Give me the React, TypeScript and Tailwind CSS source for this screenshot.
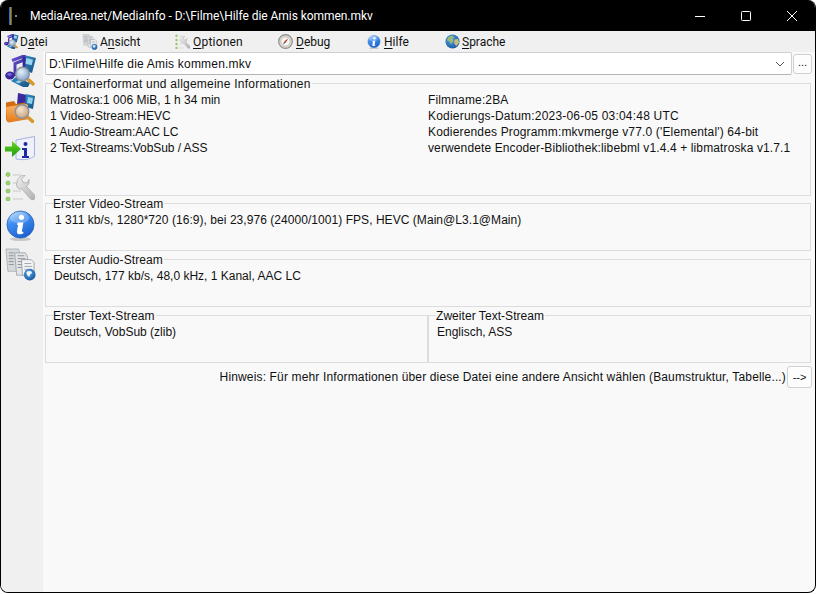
import React from "react";

const Defs = () => (
  <svg width="0" height="0" className="block">
    <defs>
      <linearGradient id="bluei" x1="0.2" y1="0" x2="0.7" y2="1">
        <stop offset="0" stopColor="#a8d0fb" />
        <stop offset="0.35" stopColor="#3f8ff0" />
        <stop offset="1" stopColor="#1a5fd0" />
      </linearGradient>
      <linearGradient id="purple" x1="0" y1="0" x2="1" y2="1">
        <stop offset="0" stopColor="#6a5ad8" />
        <stop offset="1" stopColor="#2a1e80" />
      </linearGradient>
      <linearGradient id="film" x1="0" y1="0" x2="1" y2="1">
        <stop offset="0" stopColor="#2f8fc8" />
        <stop offset="1" stopColor="#1c4f80" />
      </linearGradient>
      <radialGradient id="lens" cx="0.4" cy="0.35" r="0.7">
        <stop offset="0" stopColor="#e6f0fa" />
        <stop offset="1" stopColor="#7d9fc8" />
      </radialGradient>
      <radialGradient id="lens2" cx="0.4" cy="0.35" r="0.7">
        <stop offset="0" stopColor="#f6e4d2" />
        <stop offset="1" stopColor="#c8a078" />
      </radialGradient>
      <linearGradient id="folder" x1="0" y1="0" x2="0" y2="1">
        <stop offset="0" stopColor="#fbb56a" />
        <stop offset="1" stopColor="#e27a18" />
      </linearGradient>
      <linearGradient id="arrow" x1="0" y1="0" x2="0" y2="1">
        <stop offset="0" stopColor="#66d820" />
        <stop offset="1" stopColor="#1d9a10" />
      </linearGradient>
      <linearGradient id="wrench" x1="0" y1="0" x2="1" y2="1">
        <stop offset="0" stopColor="#f0f0f0" />
        <stop offset="1" stopColor="#b0b0b0" />
      </linearGradient>
      <radialGradient id="globe" cx="0.4" cy="0.35" r="0.75">
        <stop offset="0" stopColor="#5aa8e8" />
        <stop offset="1" stopColor="#0f4f98" />
      </radialGradient>
    </defs>
  </svg>
);

const Lens = ({ x, y, r, fill = "url(#lens)" }: { x: number; y: number; r: number; fill?: string }) => (
  <>
    <path d={`M${x + r * 0.7} ${y + r * 0.7}L${x + r * 1.55} ${y + r * 1.45}`} stroke="#d9962e" strokeWidth={r * 0.5} strokeLinecap="round" />
    <circle cx={x} cy={y} r={r} fill={fill} stroke="#8a929c" strokeWidth={r * 0.2} />
  </>
);

const MusicIcon = ({ s }: { s: number }) => (
  <svg width={s} height={s} viewBox="0 0 32 32">
    <path d="M19 0l12 3-4 15-9-3z" fill="url(#film)" />
    <path d="M21.500 3l6.500 1.800-1.400 5.400-6.600-1.800z" fill="#9ad6f2" />
    <path d="M6 26l5-4 14 6-2 4-5 0z" fill="url(#film)" />
    <path d="M10 27l4-2 3 1.500-3 2z" fill="#8fd0f0" />
    <path d="M7 5.500L19 1v4L10 8.500V21" fill="none" stroke="url(#purple)" strokeWidth="3" />
    <path d="M19 2v16" stroke="#38289a" strokeWidth="2.800" />
    <ellipse cx="5" cy="20.500" rx="4.800" ry="4" fill="#3a2a9c" />
    <ellipse cx="4.500" cy="19.500" rx="2.200" ry="1.400" fill="#7a6ae0" />
    <ellipse cx="15" cy="18.500" rx="4.500" ry="3.600" fill="#3a2a9c" />
    <Lens x={17.500} y={19} r={6.800} />
  </svg>
);

const FolderIcon = ({ s }: { s: number }) => (
  <svg width={s} height={s} viewBox="0 0 32 32">
    <path d="M13 0l9 2-1 12-9-2z" fill="#3a2a9c" />
    <path d="M21 1l9 2-2 13-8-2z" fill="url(#film)" />
    <path d="M23 4l5 1-1 6-5-1z" fill="#8fd0f0" />
    <path d="M1 9.500 L9 8 L11 11 L20 9.500 L22 26 L3 29 Q1.500 29 1 26z" fill="#cf6d10" />
    <path d="M1 14 L21 11 Q23 11 23 14 L24 26 L4 29.500 Q2 29.500 2 27z" fill="url(#folder)" />
    <Lens x={17} y={18.500} r={6.800} fill="url(#lens2)" />
  </svg>
);

const ArrowPageIcon = () => (
  <svg width="31" height="25" viewBox="0 0 31 25">
    <path d="M11 4 L29.500 0.500 L29.500 20 Q24 24.500 15 23.500 L11 23z" fill="#eef1fb" stroke="#a8b0de" strokeWidth="1" />
    <circle cx="20.500" cy="8" r="2" fill="#1f2aa0" />
    <path d="M17 12h5v8h2v2h-7v-2h2v-6h-2z" fill="#1f2aa0" />
    <path d="M0 10.500h7V5l9 8-9 8v-5.500H0z" fill="url(#arrow)" />
  </svg>
);

const WrenchIcon = ({ s }: { s: number }) => (
  <svg width={s} height={s} viewBox="0 0 30 30">
    <path d="M8 4h8M8 12h6M8 20h8M8 28h10" stroke="#d4d6d4" strokeWidth="1.500" />
    <g fill="#9ad86c" stroke="#6cae48" strokeWidth="0.600">
      <circle cx="3" cy="3.500" r="2" />
      <circle cx="3" cy="12" r="2" />
      <circle cx="3" cy="20" r="2" />
      <circle cx="3" cy="28" r="2" />
    </g>
    <path d="M12.500 8.500 Q15 4 20 4.500 L16.500 8 L18 11.500 L22 12 L24 8.500 Q25 13 21.500 15.500 L30 24.500 Q31 27 29 28.500 Q26.500 29.500 25 27.500 L17 18 Q12 18.500 11.500 14z" fill="url(#wrench)" stroke="#a4a4a4" strokeWidth="0.700" />
  </svg>
);

const InfoIcon = ({ s }: { s: number }) => (
  <svg width={s} height={s} viewBox="0 0 30 32">
    <ellipse cx="15" cy="30" rx="11" ry="2" fill="#c8c8c8" />
    <circle cx="15" cy="15" r="14" fill="url(#bluei)" stroke="#2a62b8" strokeWidth="0.800" />
    <ellipse cx="14" cy="8" rx="10" ry="6" fill="#ffffff" opacity="0.25" />
    <circle cx="16" cy="7.500" r="2.700" fill="#ffffff" />
    <path d="M12 13h6l-1.500 8.500q-.2 1.500 1.500 1v1.500q-2 1.500-5 1-2-.5-1.700-3l1.200-6.500H11.500z" fill="#ffffff" />
  </svg>
);

const DocsIcon = ({ s }: { s: number }) => (
  <svg width={s} height={s} viewBox="0 0 32 34">
    <path d="M1 1h13l1 3 1 20H3z" fill="#d6d9dc" stroke="#a4a8ac" strokeWidth="0.800" />
    <path d="M10 5h11l2 3 1 20H12z" fill="#e2e4e6" stroke="#989ca0" strokeWidth="0.800" />
    <path d="M13 8h7M13 11h8M13 14h8M13 17h8M13 20h8M4 5h5M4 8h5M4 11h5M4 14h5M4 17h5" stroke="#8d9399" strokeWidth="1" />
    <path d="M17 12h10l3 3v13H18z" fill="#f2f3f4" stroke="#8d9297" strokeWidth="0.800" />
    <path d="M20 16h7M20 19h8M20 22h8" stroke="#a2a6aa" strokeWidth="1" />
    <circle cx="25.500" cy="27.500" r="6" fill="url(#globe)" />
    <path d="M22 25q2-2 5-1l1 2-2 1-1 3-2-2z" fill="#f2f6fa" />
  </svg>
);

const CompassIcon = () => (
  <svg width="15" height="15" viewBox="0 0 16 16">
    <circle cx="8" cy="8" r="7.300" fill="#d8d6d0" stroke="#8f8c84" strokeWidth="1.200" />
    <circle cx="8" cy="8" r="4.800" fill="#f8f8f6" stroke="#b5b2aa" strokeWidth="0.600" />
    <path d="M11 4.500L7 7.500 8.500 9z" fill="#d23a2a" />
    <path d="M5 11.500l2-4 1.500 1.500z" fill="#666" />
  </svg>
);

const GlobeIcon = () => (
  <svg width="15" height="15" viewBox="0 0 16 16">
    <circle cx="8" cy="8" r="7.500" fill="url(#globe)" />
    <path d="M3 4q3-3 6-2 1 2-1 3l1 3-3 3-1-3-3-1z" fill="#9ab878" />
    <path d="M10 6l4-1 1 4-3 4-2-3z" fill="#c8bd7c" />
  </svg>
);

const MenuItem = ({ icon, pre, u, post, className }: { icon: React.ReactNode; pre?: string; u: string; post: string; className: string }) => (
  <div className={`flex shrink-0 items-center ${className}`}>
    {icon}
    <span className="whitespace-pre">
      {pre}
      <u className="underline-offset-2">{u}</u>
      {post}
    </span>
  </div>
);

const Box = ({ title, className = "", track = "", children }: { title: string; className?: string; track?: string; children: React.ReactNode }) => (
  <fieldset className={`min-w-0 border border-[#dcdcdc] ${className}`}>
    <legend className={`ml-[7px] pt-[2px] pr-[1px] leading-[13px] ${track}`}>{title}</legend>
    {children}
  </fieldset>
);

const left = [
  { t: "Matroska:1 006 MiB, 1 h 34 min", c: "tracking-[0.03px]" },
  { t: "1 Video-Stream:HEVC", c: "tracking-[0.05px]" },
  { t: "1 Audio-Stream:AAC LC", c: "tracking-[-0.05px]" },
  { t: "2 Text-Streams:VobSub / ASS", c: "tracking-[-0.07px]" },
];
const right = [
  { t: "Filmname:2BA", c: "tracking-[0.15px]" },
  { t: "Kodierungs-Datum:2023-06-05 03:04:48 UTC", c: "tracking-[0.2px]" },
  { t: "Kodierendes Programm:mkvmerge v77.0 ('Elemental') 64-bit", c: "tracking-[0.16px]" },
  { t: "verwendete Encoder-Bibliothek:libebml v1.4.4 + libmatroska v1.7.1", c: "tracking-[0.12px]" },
];

export default function App() {
  return (
    <div className="h-[594px] w-[818px] bg-white">
      <Defs />
      <div className="flex h-[593px] w-[816px] flex-col overflow-hidden rounded-lg border-x border-b border-black bg-[#f9f9f9] text-[12px] text-[#111111] [font-family:'Liberation_Sans',Arial,sans-serif]">
        <header className="flex h-[31px] shrink-0 items-center bg-black pl-[8px] text-white">
          <div className="flex h-[18px] w-[3px] shrink-0">
            <div className="w-px bg-[#2a6ae0]" />
            <div className="w-px bg-[#22c040]" />
            <div className="w-px bg-[#d03030]" />
          </div>
          <div className="ml-[3px] h-[2px] w-[2px] shrink-0 bg-[#888]" />
          <div className="ml-[13px] flex-1 text-[12px] tracking-[-0.05px] [font-family:Roboto,sans-serif]">MediaArea.net/MediaInfo - D:\Filme\Hilfe die Amis kommen.mkv</div>
          <div className="flex h-full items-center">
            <div className="flex w-[46px] justify-center">
              <svg width="10" height="10" viewBox="0 0 10 10"><path d="M0 5.500h10" stroke="#fff" /></svg>
            </div>
            <div className="flex w-[46px] justify-center">
              <svg width="10" height="10" viewBox="0 0 10 10"><rect x="0.500" y="0.500" width="9" height="9" rx="1" fill="none" stroke="#fff" /></svg>
            </div>
            <div className="flex w-[46px] justify-center">
              <svg width="10" height="10" viewBox="0 0 10 10"><path d="M0 0l10 10M10 0L0 10" stroke="#fff" /></svg>
            </div>
          </div>
        </header>
        <nav className="flex h-[21px] shrink-0 items-center bg-[#f0f0f0] pl-[3px] text-[12px] [font-family:Roboto,sans-serif]">
          <MenuItem className="w-[78px] gap-[1px]" icon={<MusicIcon s={15} />} pre="D" u="a" post="tei" />
          <MenuItem className="w-[93px] gap-[2px]" icon={<DocsIcon s={16} />} pre="A" u="n" post="sicht" />
          <MenuItem className="w-[103px] gap-[3px] tracking-[0.2px]" icon={<WrenchIcon s={15} />} u="O" post="ptionen" />
          <MenuItem className="w-[89px] gap-[3px]" icon={<CompassIcon />} u="D" post="ebug" />
          <MenuItem className="w-[78px] gap-[3px]" icon={<InfoIcon s={14} />} u="H" post="ilfe" />
          <MenuItem className="gap-[2px]" icon={<GlobeIcon />} u="S" post="prache" />
        </nav>
        <div className="flex min-h-0 flex-1">
          <aside className="flex w-[42px] shrink-0 flex-col items-start bg-[#f0f0f0] pl-[4px] pt-[3px]">
            <MusicIcon s={32} />
            <div className="mt-[6px]"><FolderIcon s={32} /></div>
            <div className="mt-[11px]"><ArrowPageIcon /></div>
            <div className="mt-[10px]"><WrenchIcon s={30} /></div>
            <div className="mt-[9px]"><InfoIcon s={31} /></div>
            <div className="-ml-px mt-[7px]"><DocsIcon s={33} /></div>
          </aside>
          <main className="flex min-w-0 flex-1 flex-col pl-[2px] pr-[4px]">
            <div className="flex h-[23px] shrink-0 items-center">
              <div className="flex h-[23px] w-[747px] shrink-0 items-center justify-between rounded-[2px] border border-[#cfcfcf] border-b-[#b4b4b4] bg-white pl-[3px] pr-[6px]">
                <span className="tracking-[0.2px]">D:\Filme\Hilfe die Amis kommen.mkv</span>
                <svg width="10" height="6" viewBox="0 0 10 6"><path d="M1 1l4 4 4-4" fill="none" stroke="#555" /></svg>
              </div>
              <div className="ml-[1px] -mr-px flex h-[20px] w-[19px] shrink-0 items-center justify-center rounded-[3px] border border-[#d0d0d0] bg-[#fdfdfd] pb-[3px] text-[11px] leading-none">...</div>
            </div>
            <Box title="Containerformat und allgemeine Informationen" track="tracking-[0.23px]" className="mt-[1px] h-[120px] shrink-0">
              <div className="mt-[1px] grid grid-cols-[378px_1fr] pl-[4px] leading-[16px]">
                <div>{left.map((l) => <div key={l.t} className={l.c}>{l.t}</div>)}</div>
                <div>{right.map((l) => <div key={l.t} className={`whitespace-nowrap ${l.c}`}>{l.t}</div>)}</div>
              </div>
            </Box>
            <Box title="Erster Video-Stream" track="tracking-[0.1px]" className="h-[55px] shrink-0">
              <div className="mt-[1px] pl-[9px] leading-[16px] tracking-[0.05px]">1 311 kb/s, 1280*720 (16:9), bei 23,976 (24000/1001) FPS, HEVC (Main@L3.1@Main)</div>
            </Box>
            <Box title="Erster Audio-Stream" track="tracking-[0.1px]" className="mt-[1px] h-[55px] shrink-0">
              <div className="mt-[1px] pl-[8px] leading-[16px]">Deutsch, 177 kb/s, 48,0 kHz, 1 Kanal, AAC LC</div>
            </Box>
            <div className="mt-[1px] flex shrink-0">
              <Box title="Erster Text-Stream" track="tracking-[0.1px]" className="h-[55px] w-[383px] shrink-0">
                <div className="mt-[1px] pl-[8px] leading-[16px]">Deutsch, VobSub (zlib)</div>
              </Box>
              <Box title="Zweiter Text-Stream" track="tracking-[0.05px]" className="h-[55px] flex-1">
                <div className="mt-[1px] pl-[8px] leading-[16px]">Englisch, ASS</div>
              </Box>
            </div>
            <div className="mt-[3px] flex items-center justify-end">
              <span className="mr-[1px] whitespace-nowrap tracking-[0.147px]">Hinweis: Für mehr Informationen über diese Datei eine andere Ansicht wählen (Baumstruktur, Tabelle...)</span>
              <div className="-mr-px flex h-[22px] w-[25px] items-center justify-center rounded-[3px] border border-[#d0d0d0] bg-[#fdfdfd] text-[11px]">--&gt;</div>
            </div>
          </main>
        </div>
      </div>
    </div>
  );
}
